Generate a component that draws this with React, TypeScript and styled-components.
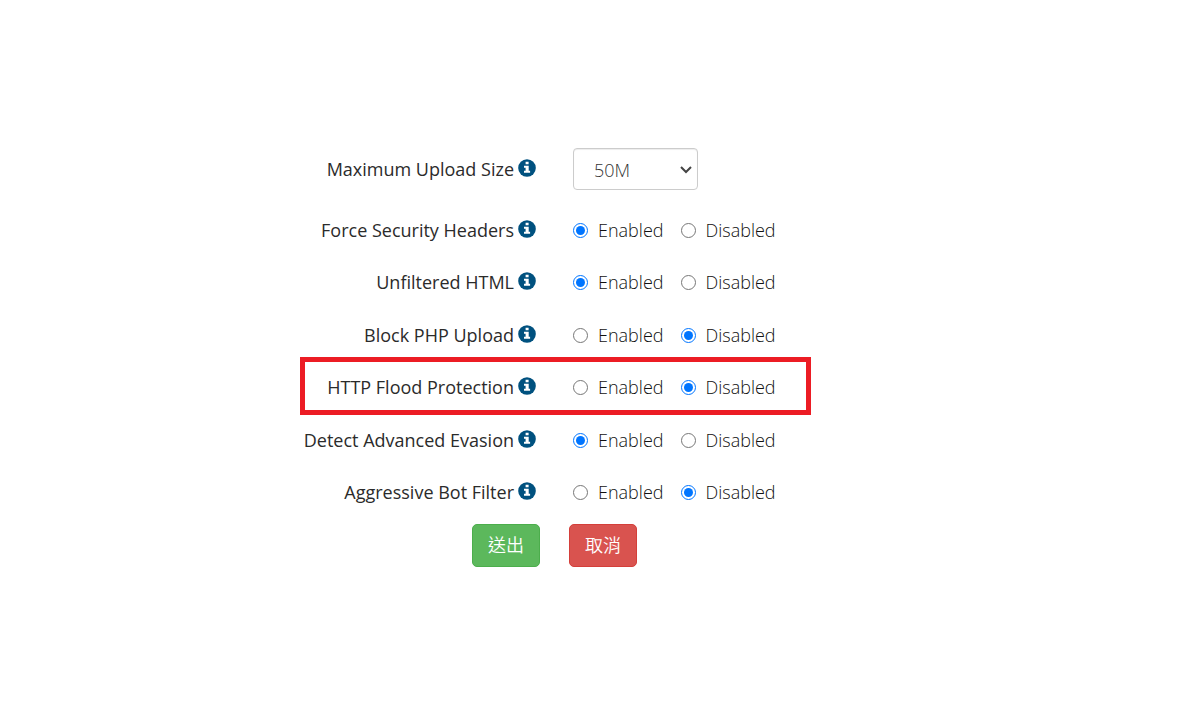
import React, { useState } from "react";
import styled, { createGlobalStyle } from "styled-components";

const GlobalStyle = createGlobalStyle`
  *, *::before, *::after {
    box-sizing: border-box;
  }
  body {
    margin: 0;
    background: #fff;
    color: #2b2b2b;
    font-family: "Open Sans", "Noto Sans CJK TC", sans-serif;
    font-size: 18px;
    line-height: 26px;
  }
`;

const Page = styled.main`
  display: flex;
  justify-content: center;
  padding: 148px 89px 40px 0;
`;

const Form = styled.form`
  width: 100%;
  max-width: 511px;
`;

const Row = styled.div<{ $highlighted?: boolean }>`
  position: relative;
  display: grid;
  grid-template-columns: 236px 1fr;
  column-gap: 37px;
  align-items: start;
  padding-top: 13px;

  &::after {
    content: "";
    display: ${(p) => (p.$highlighted ? "block" : "none")};
    position: absolute;
    inset: -4px 0 -1px;
    border: 5px solid #ec1c24;
    pointer-events: none;
  }
`;

const SizeRow = styled(Row)`
  align-items: center;
  padding: 0 0 14px;
`;

const Rows = styled.div`
  display: grid;
  grid-template-rows: 56px repeat(3, 52px 53px);
`;

const Caption = styled.div`
  display: flex;
  align-items: center;
  justify-content: flex-end;
  gap: 4px;
  font-weight: 500;
  white-space: nowrap;
`;

const IconSvg = styled.svg`
  flex: none;
  width: 18px;
  height: 18px;
  margin-bottom: 2px;
`;

const SelectFrame = styled.div`
  position: relative;
  width: 125px;
`;

const SizeSelect = styled.select`
  display: block;
  appearance: none;
  width: 100%;
  height: 42px;
  padding: 2px 24px 0 20px;
  border: 1px solid #ccc;
  border-radius: 4px;
  background: #fff;
  box-shadow: inset 0 1px 1px rgba(0, 0, 0, 0.075);
  color: #333;
  font: inherit;
  font-weight: 300;
`;

const Chevron = styled.svg`
  position: absolute;
  top: 17px;
  right: 5px;
  width: 14px;
  height: 9px;
  pointer-events: none;
`;

const Options = styled.div`
  display: flex;
  gap: 17px;
`;

const Option = styled.label`
  display: flex;
  align-items: center;
  gap: 10px;
  color: #111;
  font-weight: 300;
`;

const Radio = styled.input`
  width: 15px;
  height: 15px;
  margin: 0;
`;

const Actions = styled.div`
  display: flex;
  gap: 29px;
  padding: 5px 0 0 172px;
`;

const ActionButton = styled.button<{ $fill: string; $edge: string }>`
  width: 68px;
  height: 43px;
  padding: 0 0 2px;
  border: 1px solid ${(p) => p.$edge};
  border-radius: 5px;
  background: ${(p) => p.$fill};
  color: #fff;
  font: inherit;
  font-weight: 350;
`;

function InfoIcon() {
  return (
    <IconSvg viewBox="0 0 18 18" aria-hidden>
      <circle cx="9" cy="9" r="8.8" fill="#00517f" />
      <path fill="#fff" d="M7.6 2.8h3v2.4h-3zM6 6.8h4.7v5h1.4v2H6v-2h1.6v-3H6z" />
    </IconSvg>
  );
}

const settings = [
  { id: "headers", label: "Force Security Headers", enabled: true },
  { id: "html", label: "Unfiltered HTML", enabled: true },
  { id: "php", label: "Block PHP Upload", enabled: false },
  { id: "flood", label: "HTTP Flood Protection", enabled: false, highlighted: true },
  { id: "evasion", label: "Detect Advanced Evasion", enabled: true },
  { id: "bots", label: "Aggressive Bot Filter", enabled: false },
];

type ToggleProps = {
  id: string;
  label: string;
  enabled: boolean;
  highlighted?: boolean;
};

function ToggleRow({ id, label, enabled, highlighted }: ToggleProps) {
  const [on, setOn] = useState(enabled);
  return (
    <Row $highlighted={highlighted} role="radiogroup" aria-labelledby={`${id}-label`}>
      <Caption>
        <span id={`${id}-label`}>{label}</span>
        <InfoIcon />
      </Caption>
      <Options>
        <Option>
          <Radio type="radio" name={id} checked={on} onChange={() => setOn(true)} />
          Enabled
        </Option>
        <Option>
          <Radio type="radio" name={id} checked={!on} onChange={() => setOn(false)} />
          Disabled
        </Option>
      </Options>
    </Row>
  );
}

export default function App() {
  return (
    <>
      <GlobalStyle />
      <Page>
        <Form onSubmit={(e) => e.preventDefault()}>
          <Rows>
            <SizeRow>
              <Caption>
                <label htmlFor="upload-size">Maximum Upload Size</label>
                <InfoIcon />
              </Caption>
              <SelectFrame>
                <SizeSelect id="upload-size" defaultValue="50M">
                  <option>50M</option>
                  <option>100M</option>
                </SizeSelect>
                <Chevron viewBox="0 0 14 9" aria-hidden>
                  <path d="M2 2l5 5 5-5" fill="none" stroke="#444" strokeWidth="2" />
                </Chevron>
              </SelectFrame>
            </SizeRow>
            {settings.map((s) => (
              <ToggleRow key={s.id} {...s} />
            ))}
          </Rows>
          <Actions>
            <ActionButton type="submit" $fill="#5cb85c" $edge="#4cae4c">
              送出
            </ActionButton>
            <ActionButton type="reset" $fill="#d9534f" $edge="#d43f3a">
              取消
            </ActionButton>
          </Actions>
        </Form>
      </Page>
    </>
  );
}
